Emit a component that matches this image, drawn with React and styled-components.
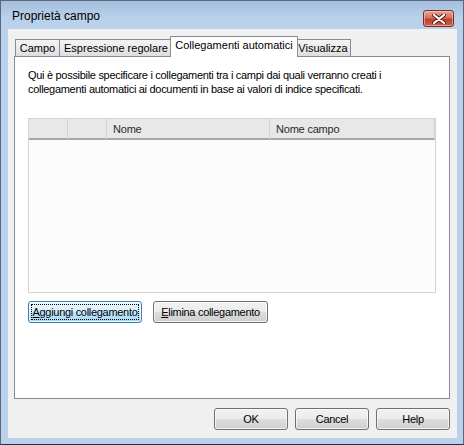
import React from "react";
import styled, { createGlobalStyle, css } from "styled-components";

const Global = createGlobalStyle`
  html, body { margin: 0; padding: 0; background: #ffffff; }
  body { width: 464px; height: 445px; overflow: hidden; }
`;

const UI = `Tahoma, "Liberation Sans", "DejaVu Sans", sans-serif`;
const SEGOE = `"Segoe UI", "Liberation Sans", sans-serif`;

const Window = styled.div`
  box-sizing: border-box;
  width: 464px;
  height: 445px;
  display: flex;
  flex-direction: column;
  border: 1px solid #5a6a7a;
  border-bottom-color: #1d3340;
  background: #b9d1ea;
`;

const TitleBar = styled.div`
  height: 29px;
  display: flex;
  align-items: flex-start;
  justify-content: space-between;
  padding: 0 9px 0 11px;
  background: linear-gradient(#a4bedd, #bad1ea 60%, #b9d1ea);
`;

const Title = styled.span`
  font-family: ${SEGOE};
  font-size: 12px;
  color: #000;
  margin-top: 8px;
`;

const CloseButton = styled.div`
  box-sizing: border-box;
  width: 31px;
  height: 17px;
  margin-top: 9px;
  border: 1px solid #7a2a22;
  border-radius: 3px;
  background: linear-gradient(#e7a596, #d6705d 45%, #c2412b 55%, #d0604a);
  box-shadow: inset 0 0 0 1px rgba(255, 220, 210, 0.5);
  display: flex;
  align-items: center;
  justify-content: center;
`;

const Client = styled.div`
  flex: 1;
  margin: 0 6px 6px 7px;
  background: #f0f0f0;
  display: flex;
  flex-direction: column;
  padding: 7px 7px 8px 6px;
`;

const TabStrip = styled.div`
  display: flex;
  align-items: flex-end;
  height: 20px;
  padding-left: 2px;
  position: relative;
  z-index: 1;
`;

const Tab = styled.div`
  box-sizing: border-box;
  width: ${(p) => p.$w}px;
  height: 17px;
  margin-left: -1px;
  border: 1px solid #898c95;
  border-bottom: none;
  background: linear-gradient(#f3f3f3, #ebebeb 50%, #dddddd);
  font-family: ${SEGOE};
  font-size: 11px;
  line-height: 16px;
  color: #000;
  text-align: center;
  white-space: nowrap;
  ${(p) =>
    p.$active &&
    css`
      height: 21px;
      margin: 0 -2px -1px -3px;
      background: #ffffff;
      position: relative;
      z-index: 2;
      line-height: 17px;
    `}
`;

const Panel = styled.div`
  box-sizing: border-box;
  height: 343px;
  border: 1px solid #898c95;
  background: #ffffff;
  padding: 11px 13px 0 13px;
  display: flex;
  flex-direction: column;
`;

const Description = styled.p`
  margin: 0;
  font-family: ${UI};
  font-size: 11px;
  letter-spacing: -0.3px;
  line-height: 14px;
  color: #000;
`;

const ListView = styled.div`
  box-sizing: border-box;
  margin-top: 22px;
  height: 175px;
  border: 1px solid #d3d3d3;
  background: #fcfcfc;
  display: flex;
  flex-direction: column;
`;

const Header = styled.div`
  display: grid;
  grid-template-columns: 39px 39px 163px 1fr;
  height: 21px;
  background: #e8e8e8;
  border-bottom: 2px solid #a7a7a7;
  box-sizing: border-box;
`;

const HeaderCell = styled.div`
  font-family: ${UI};
  font-size: 11px;
  letter-spacing: -0.2px;
  line-height: 20px;
  color: #2b2b2b;
  padding-left: 6px;
  border-right: 1px solid #d5d5d5;
  white-space: nowrap;
`;

const ButtonRow = styled.div`
  display: flex;
  gap: 11px;
  margin-top: 8px;
`;

const Button = styled.div`
  box-sizing: border-box;
  width: ${(p) => p.$w || 74}px;
  height: 22px;
  border: 1px solid ${(p) => (p.$focused ? "#3c7fb1" : "#707070")};
  border-radius: 3px;
  background: ${(p) =>
    p.$focused
      ? "linear-gradient(#eaf6fd, #d9f0fc 50%, #bee6fd 50%, #a7d9f5)"
      : "linear-gradient(#f2f2f2, #ebebeb 50%, #dddddd 50%, #cfcfcf)"};
  box-shadow: inset 0 0 0 1px rgba(255, 255, 255, 0.7);
  font-family: ${UI};
  font-size: 11px;
  letter-spacing: -0.3px;
  color: #000;
  display: flex;
  align-items: center;
  justify-content: center;
  padding: 2px;
`;

const FocusRing = styled.span`
  box-sizing: border-box;
  flex: 1;
  align-self: stretch;
  display: flex;
  align-items: center;
  justify-content: center;
  border: ${(p) => (p.$on ? "1px dotted #000" : "1px solid transparent")};
  white-space: nowrap;
`;

const Footer = styled.div`
  display: flex;
  justify-content: flex-end;
  gap: 7px;
  margin-top: 9px;
`;

const U = styled.span`
  text-decoration: underline;
`;

function CloseGlyph() {
  return (
    <svg width="14" height="10" viewBox="0 0 14 10">
      <path
        d="M2 1 L12 9 M12 1 L2 9"
        stroke="#5a1d16"
        strokeWidth="4"
        strokeLinecap="round"
      />
      <path
        d="M2 1 L12 9 M12 1 L2 9"
        stroke="#ffffff"
        strokeWidth="2.2"
        strokeLinecap="round"
      />
    </svg>
  );
}

export default function App() {
  return (
    <>
      <Global />
      <Window>
        <TitleBar>
          <Title>Proprietà campo</Title>
          <CloseButton>
            <CloseGlyph />
          </CloseButton>
        </TitleBar>
        <Client>
          <TabStrip>
            <Tab $w={45}>Campo</Tab>
            <Tab $w={114}>Espressione regolare</Tab>
            <Tab $w={128} $active>
              Collegamenti automatici
            </Tab>
            <Tab $w={56}>Visualizza</Tab>
          </TabStrip>
          <Panel>
            <Description>
              Qui è possibile specificare i collegamenti tra i campi dai quali
              verranno creati i collegamenti automatici ai documenti in base ai
              valori di indice specificati.
            </Description>
            <ListView>
              <Header>
                <HeaderCell />
                <HeaderCell />
                <HeaderCell>Nome</HeaderCell>
                <HeaderCell>Nome campo</HeaderCell>
              </Header>
            </ListView>
            <ButtonRow>
              <Button $w={114} $focused>
                <FocusRing $on>
                  <U>A</U>ggiungi collegamento
                </FocusRing>
              </Button>
              <Button $w={115}>
                <FocusRing>
                  <U>E</U>limina collegamento
                </FocusRing>
              </Button>
            </ButtonRow>
          </Panel>
          <Footer>
            <Button $w={74}>
              <FocusRing>OK</FocusRing>
            </Button>
            <Button $w={74}>
              <FocusRing>Cancel</FocusRing>
            </Button>
            <Button $w={74}>
              <FocusRing>Help</FocusRing>
            </Button>
          </Footer>
        </Client>
      </Window>
    </>
  );
}
